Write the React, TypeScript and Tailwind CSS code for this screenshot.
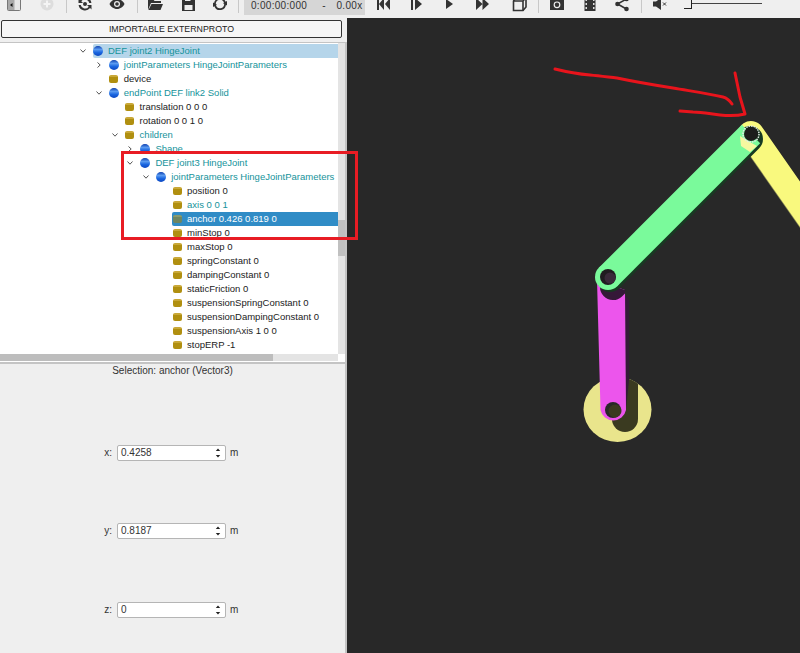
import type { ReactNode } from 'react';

type Row = {
  label: string;
  depth: number;
  kind: 'ball' | 'field';
  arrow?: 'open' | 'closed';
  teal?: boolean;
  state?: 'parent' | 'selected';
};

const rows: Row[] = [
  { label: 'DEF joint2 HingeJoint', depth: 0, kind: 'ball', arrow: 'open', teal: true, state: 'parent' },
  { label: 'jointParameters HingeJointParameters', depth: 1, kind: 'ball', arrow: 'closed', teal: true },
  { label: 'device', depth: 1, kind: 'field' },
  { label: 'endPoint DEF link2 Solid', depth: 1, kind: 'ball', arrow: 'open', teal: true },
  { label: 'translation 0 0 0', depth: 2, kind: 'field' },
  { label: 'rotation 0 0 1 0', depth: 2, kind: 'field' },
  { label: 'children', depth: 2, kind: 'field', arrow: 'open', teal: true },
  { label: 'Shape', depth: 3, kind: 'ball', arrow: 'closed', teal: true },
  { label: 'DEF joint3 HingeJoint', depth: 3, kind: 'ball', arrow: 'open', teal: true },
  { label: 'jointParameters HingeJointParameters', depth: 4, kind: 'ball', arrow: 'open', teal: true },
  { label: 'position 0', depth: 5, kind: 'field' },
  { label: 'axis 0 0 1', depth: 5, kind: 'field', teal: true },
  { label: 'anchor 0.426 0.819 0', depth: 5, kind: 'field', state: 'selected' },
  { label: 'minStop 0', depth: 5, kind: 'field' },
  { label: 'maxStop 0', depth: 5, kind: 'field' },
  { label: 'springConstant 0', depth: 5, kind: 'field' },
  { label: 'dampingConstant 0', depth: 5, kind: 'field' },
  { label: 'staticFriction 0', depth: 5, kind: 'field' },
  { label: 'suspensionSpringConstant 0', depth: 5, kind: 'field' },
  { label: 'suspensionDampingConstant 0', depth: 5, kind: 'field' },
  { label: 'suspensionAxis 1 0 0', depth: 5, kind: 'field' },
  { label: 'stopERP -1', depth: 5, kind: 'field' },
];

function Chevron({ dir }: { dir: 'open' | 'closed' }) {
  return (
    <svg width="10" height="10" viewBox="0 0 10 10" fill="none" stroke="#555" strokeWidth="1">
      {dir === 'open' ? <path d="M2.500 3.500 5 6.200 7.500 3.500" /> : <path d="M3.500 2.500 6.200 5 3.500 7.500" />}
    </svg>
  );
}

function NodeIcon({ kind, dim }: { kind: 'ball' | 'field'; dim?: boolean }) {
  if (kind === 'ball') {
    return <div className="h-[10px] w-[10px] rounded-full bg-[linear-gradient(180deg,#0c3fb0_0%,#5a9af0_35%,#1a66e0_65%,#0b45c0_100%)]" />;
  }
  return (
    <div
      className={`h-[8px] w-[9px] rounded-[2px] border-t-2 ${
        dim ? 'border-[#8a9a6a] bg-[#6f8660]' : 'border-[#c9a838] bg-[#b08f10]'
      }`}
    />
  );
}

function TreeRow({ row }: { row: Row }) {
  const selected = row.state === 'selected';
  const bg = selected ? 'bg-[#308cc6]' : row.state === 'parent' ? 'bg-[#b5d5ea]' : '';
  const color = selected ? 'text-white' : row.teal ? 'text-[#16939b]' : 'text-[#222]';
  return (
    <div className="flex h-[14px] items-center" style={{ paddingLeft: 78 + row.depth * 15.8 }}>
      <div className="flex w-[10px] shrink-0 justify-center">{row.arrow && <Chevron dir={row.arrow} />}</div>
      <div className={`ml-[5px] flex h-[14px] flex-1 items-center rounded-l-[2px] ${bg}`}>
        <div className="flex w-[10px] shrink-0 justify-center">
          <NodeIcon kind={row.kind} dim={selected} />
        </div>
        <span className={`ml-[5px] whitespace-nowrap text-[9.5px] ${color}`}>{row.label}</span>
      </div>
    </div>
  );
}

function ToolIcon({ x, children }: { x: number; children: ReactNode }) {
  return (
    <div className="flex h-[18px] w-[16px] shrink-0 items-center justify-center" style={{ marginLeft: x }}>
      <svg width="16" height="16" viewBox="0 0 16 16" fill="#333">
        {children}
      </svg>
    </div>
  );
}

function Sep({ x }: { x: number }) {
  return <div className="h-[18px] w-px shrink-0 bg-[#c8c8c8]" style={{ marginLeft: x }} />;
}

function Toolbar() {
  return (
    <div className="h-[18px] shrink-0 overflow-hidden bg-[#efefef]">
      <div className="-mt-[5px] flex h-[18px] items-center">
        <ToolIcon x={6}>
          <path d="M2.500 1.500h11a1 1 0 0 1 1 1v11a1 1 0 0 1-1 1h-11a1 1 0 0 1-1-1v-11a1 1 0 0 1 1-1z" fill="#e6e6e6" stroke="#777" />
          <path d="M2 2h6.500v12H2z" fill="#a8a8a8" />
          <path d="M6.500 7v4L4 9z" fill="#111" />
        </ToolIcon>
        <ToolIcon x={17}>
          <circle cx="8" cy="8" r="6.500" fill="#ddd" />
          <path d="M7 4.500h2V7h2.500v2H9v2.500H7V9H4.500V7H7z" fill="#f4f4f4" />
        </ToolIcon>
        <Sep x={11} />
        <ToolIcon x={10}>
          <path d="M8 1.500a6.500 6.500 0 0 1 6.400 5.500h-2.100A4.500 4.500 0 0 0 4.300 5.300L6 7H1.500V2.500l1.400 1.400A6.500 6.500 0 0 1 8 1.500zM1.600 9h2.100a4.500 4.500 0 0 0 8 1.700L10 9h4.500v4.500l-1.400-1.400A6.500 6.500 0 0 1 1.600 9z" />
          <circle cx="8" cy="8" r="2" />
        </ToolIcon>
        <ToolIcon x={16}>
          <path d="M8 3c3.500 0 6.200 2.400 7.500 5-1.300 2.600-4 5-7.500 5S1.800 10.600.5 8C1.800 5.400 4.500 3 8 3z" />
          <circle cx="8" cy="8" r="3" fill="#efefef" />
          <circle cx="8" cy="8" r="1.800" />
        </ToolIcon>
        <Sep x={12} />
        <ToolIcon x={9}>
          <path d="M1 3h5l1.500 2H14v2H4L1 14z" />
          <path d="M4.500 8H16l-2.500 6H1.500z" />
        </ToolIcon>
        <ToolIcon x={17}>
          <path d="M2 1h10l3 3v11H2z" />
          <path d="M5 1.500h5.500v3.500H5zM4.500 9h8v5h-8z" fill="#efefef" />
        </ToolIcon>
        <ToolIcon x={16}>
          <path d="M8 2a6 6 0 0 1 5.600 3.800l1.400-.8v4.500L11 7.300l1-.6A4.200 4.200 0 0 0 3.800 8H2a6 6 0 0 1 6-6zM14 8a6 6 0 0 1-11.600 2.200L1 11V6.500l4 2.200-1 .6A4.200 4.200 0 0 0 12.200 8z" />
        </ToolIcon>
        <Sep x={10} />
        <div className="ml-[5px] flex h-[20px] w-[121px] shrink-0 items-center self-start bg-[#d6d6d6] pl-[7px] pt-[2px] text-[10px] text-[#333]">
          <span className="tracking-[0.3px]">0:00:00:000</span>
          <span className="ml-[15px]">-</span>
          <span className="ml-[11px] tracking-[0.3px]">0.00x</span>
        </div>
        <ToolIcon x={10}>
          <path d="M2 2h2v12H2zM9 2v12L4 8zM15 2v12L10 8z" />
        </ToolIcon>
        <ToolIcon x={17}>
          <path d="M3 2h2v12H3zM7 2l7 6-7 6z" />
        </ToolIcon>
        <ToolIcon x={17}>
          <path d="M5 3l7 5-7 5z" />
        </ToolIcon>
        <ToolIcon x={17}>
          <path d="M2 2l6.500 6L2 14zM8.500 2 15 8l-6.500 6z" />
        </ToolIcon>
        <ToolIcon x={22}>
          <path d="M4.500 1.500H14V11l-3 3.500H1.500V5z" fill="none" stroke="#333" strokeWidth="1.600" />
          <path d="M1.500 5H11v9.500M11 5l3-3.500" fill="none" stroke="#333" strokeWidth="1.600" />
        </ToolIcon>
        <Sep x={10} />
        <ToolIcon x={10}>
          <path d="M1 4h3.500l1-2h5l1 2H15v10H1z" />
          <circle cx="8" cy="8.800" r="3.400" fill="#efefef" />
          <circle cx="8" cy="8.800" r="2.200" />
        </ToolIcon>
        <ToolIcon x={17}>
          <path d="M2.500 1h11v14h-11z" />
          <path d="M3.500 3h1.500v2H3.500zM3.500 7h1.500v2H3.500zM3.500 11h1.500v2H3.500zM11 3h1.500v2H11zM11 7h1.500v2H11zM11 11h1.500v2H11z" fill="#ddd" />
        </ToolIcon>
        <ToolIcon x={16}>
          <circle cx="12.500" cy="3" r="2.300" />
          <circle cx="12.500" cy="13" r="2.300" />
          <circle cx="3.500" cy="8" r="2.300" />
          <path d="M3.500 8 12.500 3M3.500 8l9 5" stroke="#333" strokeWidth="1.500" />
        </ToolIcon>
        <Sep x={11} />
        <ToolIcon x={10}>
          <path d="M1 5.500h3L9 2v12l-5-3.500H1z" />
          <path d="M11 6.500l3 3M14 6.500l-3 3" stroke="#333" strokeWidth="1" />
        </ToolIcon>
        <div className="relative ml-[16px] h-[18px] w-[78px] shrink-0">
          <div className="absolute left-0 right-0 top-[8px] h-px bg-[#444]" />
          <div className="absolute left-0 top-[3px] h-[11px] w-[8px] border-b border-r border-[#222] bg-[#efefef]" />
        </div>
      </div>
    </div>
  );
}

function Spin({ name, value, mt }: { name: string; value: string; mt: string }) {
  return (
    <div className={`flex h-[18px] items-center ${mt}`}>
      <span className="w-[113px] pr-[1px] text-right text-[#333]">{name}</span>
      <div className="ml-[4px] flex h-[16px] w-[109px] items-center justify-between rounded-[2px] border border-[#b5b5b5] bg-white pl-[3px] pr-[4px]">
        <span className="text-[#333]">{value}</span>
        <svg width="6" height="12" viewBox="0 0 6 12" fill="#222">
          <path d="M3 1.500 5.200 4H.8zM3 10.500.8 8h4.400z" />
        </svg>
      </div>
      <span className="ml-[4px] text-[#333]">m</span>
    </div>
  );
}

function LeftPanel() {
  return (
    <div className="flex w-[347px] shrink-0 flex-col bg-[#efefef]">
      <div className="flex h-[24px] items-start px-[1px] pt-[2px]">
        <button className="h-[18px] w-[341px] rounded-[2px] border border-[#333] bg-[#f6f6f6] text-[8.8px] text-[#222]">
          IMPORTABLE EXTERNPROTO
        </button>
      </div>
      <div className="flex h-[320px] border-r-2 border-t border-[#c4c4c4] bg-white">
        <div className="flex w-[338px] flex-col overflow-hidden">
          <div className="h-[311px] overflow-hidden pt-[1px]">
            {rows.map((row) => (
              <TreeRow key={`${row.depth}-${row.label}`} row={row} />
            ))}
          </div>
          <div className="h-[7px] bg-[#e4e4e4]">
            <div className="h-[7px] w-[273px] bg-[#bdbdbd]" />
          </div>
        </div>
        <div className="h-[311px] w-[7px] bg-[#e4e4e4] pt-[177px]">
          <div className="h-[36px] w-[7px] bg-[#c0c0c0]" />
        </div>
      </div>
      <div className="flex-1 border-r-2 border-t-2 border-[#c4c4c4]">
        <div className="h-[14px] text-center text-[#333]">Selection: anchor (Vector3)</div>
        <Spin name="x:" value="0.4258" mt="mt-[66px]" />
        <Spin name="y:" value="0.8187" mt="mt-[60px]" />
        <Spin name="z:" value="0" mt="mt-[61px]" />
      </div>
    </div>
  );
}

function Viewport() {
  return (
    <div className="flex-1 bg-[#282828]">
      <svg className="block h-full w-full" viewBox="347 18 453 635">
        <defs>
          <clipPath id="disc">
            <ellipse cx="617.500" cy="409.500" rx="34" ry="32.500" />
          </clipPath>
          <clipPath id="pink">
            <path d="M597 280 625 290 626 410A13 13 0 0 1 600.500 410z" />
          </clipPath>
        </defs>

        {/* base disc and its shadow */}
        <ellipse cx="617.500" cy="409.500" rx="34" ry="32.500" fill="#e9e58c" />
        <g clipPath="url(#disc)">
          <path d="M625 340 625 419" stroke="#3a3a20" strokeWidth="26" strokeLinecap="round" />
        </g>

        {/* magenta link */}
        <path d="M625 295 629 300 629 380 626 410Z" fill="#341a38" />
        <path d="M597 280 625 290 626 410A13 13 0 0 1 600.500 410z" fill="#ec55ec" />
        <g clipPath="url(#pink)">
          <path d="M613 287 760 146" stroke="#351838" strokeWidth="26" strokeLinecap="round" />
        </g>
        <circle cx="613" cy="410" r="8" fill="#282828" />
        <circle cx="615" cy="411" r="6.500" fill="#3a3a20" />

        {/* yellow link */}
        <path d="M750.700 134.800 829.700 247.800" stroke="#8a8a55" strokeWidth="26" strokeLinecap="round" />
        <path d="M751 134 830 247" stroke="#f9f97e" strokeWidth="26" strokeLinecap="round" />

        {/* green link, cut at the joint */}
        <path d="M610 279 750 139" stroke="#173a22" strokeWidth="26" strokeLinecap="round" />
        <path d="M608 277 751 134" stroke="#7afa9b" strokeWidth="26" />
        <circle cx="608" cy="277" r="13" fill="#7afa9b" />
        <path d="M740 136 748 141 757 146 750 152 741 146Z" fill="#f5f8a0" />
        <circle cx="608" cy="277" r="8" fill="#201c20" />
        <circle cx="610" cy="278" r="5.500" fill="#3a2a3a" />
        <circle cx="751" cy="134" r="8" fill="none" stroke="#e8e8e8" strokeWidth="1.500" strokeDasharray="1.500 1" />
        <circle cx="751" cy="134" r="7" fill="#1c1c1c" />

        {/* hand drawn arrow */}
        <path
          d="M555 69C567 72 578 74 590 75 600 76 608 77 617 78 636 82 654 85 673 88 690 91 706 93 723 97 727 98 730 101 732 104"
          fill="none"
          stroke="#e8141c"
          strokeWidth="3"
          strokeLinecap="round"
        />
        <path
          d="M735 73 740 97 745 114C737 116 729 116 720 115 711 114 702 112 693 112L680 111"
          fill="none"
          stroke="#e8141c"
          strokeWidth="3"
          strokeLinecap="round"
          strokeLinejoin="round"
        />
      </svg>
    </div>
  );
}

export default function App() {
  return (
    <div className="relative flex h-[653px] w-[800px] flex-col overflow-hidden bg-[#efefef] font-['Liberation_Sans',Arial,sans-serif] text-[10px] leading-[14px]">
      <Toolbar />
      <div className="flex min-h-0 flex-1">
        <LeftPanel />
        <Viewport />
      </div>
      {/* annotation drawn over the tree and the viewport */}
      <div className="absolute left-[121px] top-[151px] h-[89px] w-[237px] border-[3px] border-[#e81c24]" />
    </div>
  );
}
